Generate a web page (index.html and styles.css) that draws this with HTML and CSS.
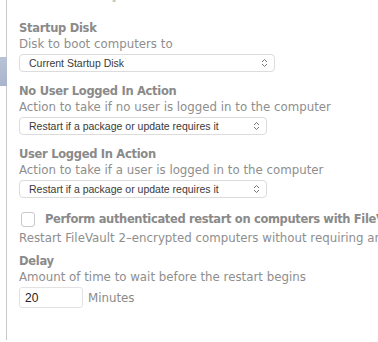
FILE: index.html
```html
<!DOCTYPE html>
<html>
<head>
<meta charset="utf-8">
<link rel="stylesheet" href="styles.css">
</head>
<body>
<div class="window">
  <div class="sidebar"><div class="sel"></div></div>
  <div class="content">
    <div class="title">Restart Options</div>
    <div class="group g1">
      <div class="label">Startup Disk</div>
      <div class="desc">Disk to boot computers to</div>
      <div class="select w1"><span>Current Startup Disk</span><svg class="arrows" width="7" height="10" viewBox="0 0 7 10"><path d="M1 4 L3.5 1.5 L6 4 M1 6 L3.5 8.5 L6 6" fill="none" stroke="#777" stroke-width="1"/></svg></div>
    </div>
    <div class="group">
      <div class="label">No User Logged In Action</div>
      <div class="desc">Action to take if no user is logged in to the computer</div>
      <div class="select w2"><span>Restart if a package or update requires it</span><svg class="arrows" width="7" height="10" viewBox="0 0 7 10"><path d="M1 4 L3.5 1.5 L6 4 M1 6 L3.5 8.5 L6 6" fill="none" stroke="#777" stroke-width="1"/></svg></div>
    </div>
    <div class="group">
      <div class="label">User Logged In Action</div>
      <div class="desc">Action to take if a user is logged in to the computer</div>
      <div class="select w2"><span>Restart if a package or update requires it</span><svg class="arrows" width="7" height="10" viewBox="0 0 7 10"><path d="M1 4 L3.5 1.5 L6 4 M1 6 L3.5 8.5 L6 6" fill="none" stroke="#777" stroke-width="1"/></svg></div>
    </div>
    <div class="group check">
      <div class="checkrow"><span class="box"></span><span class="label">Perform authenticated restart on computers with FileVault 2 enabled</span></div>
      <div class="desc checkdesc">Restart FileVault 2–encrypted computers without requiring an unlock during the next startup</div>
    </div>
    <div class="group delay">
      <div class="label">Delay</div>
      <div class="desc">Amount of time to wait before the restart begins</div>
      <div class="inputrow"><div class="input">20</div><span class="unit">Minutes</span></div>
    </div>
  </div>
</div>
</body>
</html>
```
FILE: styles.css
```css
html, body {
  margin: 0;
  padding: 0;
  background: #fff;
  overflow: hidden;
}
body {
  font-family: "DejaVu Sans", "Lucida Grande", sans-serif;
  width: 378px;
  height: 342px;
}
.window {
  display: flex;
  height: 342px;
}
.sidebar {
  width: 7px;
  flex: none;
  border-right: 1px solid #c8c8c8;
  height: 340px;
  padding-top: 57px;
  box-sizing: border-box;
}
.sel {
  height: 29px;
  width: 7px;
  background: linear-gradient(#b9c3d6, #aab5cc);
}
.content {
  padding-left: 12px;
  flex: 1;
  min-width: 0;
  white-space: nowrap;
  overflow: hidden;
}
.title {
  font-weight: bold;
  font-size: 15px;
  line-height: 12px;
  color: #c4c4c4;
  margin-top: -12px;
  height: 33px;
  margin-left: 12px;
}
.group {
  margin-top: 12px;
}
.g1 { margin-top: 0; }
.label {
  font-weight: bold;
  font-size: 11.5px;
  letter-spacing: -0.3px;
  color: #8a8a8a;
  line-height: 15px;
}
.desc {
  font-size: 11.8px;
  color: #8e8e8e;
  line-height: 16px;
}
.select {
  margin-top: 2px;
  height: 18px;
  box-sizing: border-box;
  border: 1px solid #dcdcdc;
  border-radius: 4px;
  display: flex;
  align-items: center;
  justify-content: space-between;
  padding: 0 6px 0 9px;
  font-family: "Liberation Sans", sans-serif;
  font-size: 10.5px;
  color: #3a3a3a;
}
.w1 { width: 256px; }
.w2 { width: 248px; }
.arrows { flex: none; }
.check { margin-top: 13px; }
.checkrow {
  display: flex;
  align-items: center;
  gap: 10px;
  margin-left: 2px;
}
.box {
  width: 12px;
  height: 13px;
  border: 1px solid #c8c8c8;
  border-radius: 3px;
  flex: none;
}
.checkrow .label { line-height: 17px; letter-spacing: -0.35px; }
.checkdesc { margin-top: 2px; }
.delay { margin-top: 8px; }
.inputrow {
  display: flex;
  align-items: center;
  gap: 5px;
  margin-top: 2px;
}
.input {
  width: 64px;
  height: 21px;
  box-sizing: border-box;
  border: 1px solid #e2e2e2;
  border-radius: 3px;
  font-family: "Liberation Sans", sans-serif;
  font-size: 12px;
  color: #222;
  padding: 3px 0 0 5px;
}
.unit {
  font-size: 11.8px;
  color: #8a8a8a;
}
```
